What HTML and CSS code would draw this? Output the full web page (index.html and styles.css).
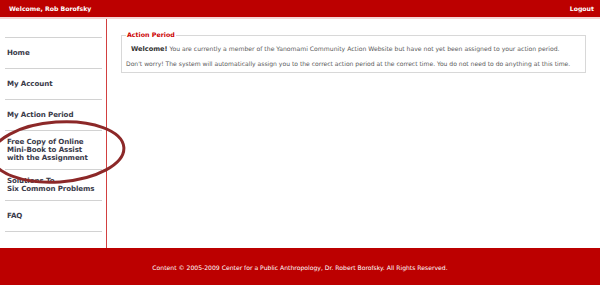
FILE: index.html
```html
<!DOCTYPE html>
<html>
<head>
    <title>Yanomami Community Action - Action Period</title>
    <link rel="stylesheet" href="styles.css">
</head>
<body>
    <div class="page">
        <div class="header">
            <span class="welcome">Welcome, Rob Borofsky</span>
            <a class="logout" href="#">Logout</a>
        </div>

        <div class="main">
            <div class="sidebar">
                <ul class="menu">
                    <li><a href="#">Home</a></li>
                    <li><a href="#">My Account</a></li>
                    <li><a href="#">My Action Period</a></li>
                    <li><a href="#">Free Copy of Online<br>Mini-Book to Assist<br>with the Assignment</a></li>
                    <li><a href="#">Solutions To<br>Six Common Problems</a></li>
                    <li><a href="#">FAQ</a></li>
                </ul>
            </div>

            <div class="content">
                <fieldset class="panel">
                    <legend>Action Period</legend>
                    <p class="intro"><b>Welcome!</b> You are currently a member of the Yanomami Community Action Website but have not yet been assigned to your action period.</p>
                    <p>Don't worry! The system will automatically assign you to the correct action period at the correct time. You do not need to do anything at this time.</p>
                </fieldset>
            </div>
        </div>

        <div class="footer">
            Content &copy; 2005-2009 Center for a Public Anthropology, Dr. Robert Borofsky. All Rights Reserved.
        </div>

        <!-- hand-drawn highlight round the mini-book link -->
        <svg class="marker" width="600" height="285" viewBox="0 0 600 285">
            <ellipse cx="58" cy="152" rx="66" ry="30" transform="rotate(-4 58 152)" fill="none" stroke="#8c2828" stroke-width="3"/>
        </svg>
    </div>
</body>
</html>
```

FILE: styles.css
```css
body {
    margin: 0;
    font-family: "DejaVu Sans", Verdana, sans-serif;
    background-color: #fff;
}

.page {
    position: relative;
    display: flex;
    flex-direction: column;
    height: 285px;
    overflow: hidden;
}

.header {
    display: flex;
    justify-content: space-between;
    align-items: center;
    height: 17px;
    padding: 0 6px 0 9px;
    background-color: #bc0000;
    border-bottom: 2px solid #f4d4d4;
    color: #fff;
    font-size: 6.2px;
    font-weight: bold;
}

.header a {
    color: #fff;
    text-decoration: none;
}

.main {
    flex: 1;
    display: flex;
}

.sidebar {
    width: 107px;
    border-right: 1px solid #d24040;
    padding: 18px 4px 0 5px;
    box-sizing: border-box;
    flex-shrink: 0;
}

.menu {
    list-style: none;
    margin: 0;
    padding: 0;
    border-top: 1px solid #d2d2d2;
}

.menu li {
    display: flex;
    align-items: center;
    min-height: 31px;
    padding: 7px 0 7px 2px;
    box-sizing: border-box;
    border-bottom: 1px solid #d2d2d2;
    line-height: 8px;
}

.menu a {
    color: #3a3a4a;
    font-size: 7.1px;
    font-weight: bold;
    letter-spacing: -0.1px;
    text-decoration: none;
}

.content {
    flex: 1;
    padding: 12px 14px 0 14px;
}

.panel {
    margin: 0;
    padding: 0 6px 4px 4px;
    border: 1px solid #d8d8d8;
    font-size: 6.05px;
    color: #5a5a5a;
}

.panel legend {
    padding: 0 1px;
    color: #cc0000;
    font-size: 6.3px;
    font-weight: bold;
    line-height: 8px;
}

.panel p {
    margin: 7px 0 0;
    line-height: 8px;
}

.panel p.intro {
    margin-top: 6px;
    padding-left: 5px;
    font-size: 6.12px;
}

.panel b {
    color: #333;
    font-size: 6.6px;
}

.footer {
    height: 37px;
    line-height: 39px;
    text-align: center;
    background-color: #bc0000;
    color: #fff;
    font-size: 6.1px;
}

.marker {
    position: absolute;
    left: 0;
    top: 0;
    pointer-events: none;
}
```
